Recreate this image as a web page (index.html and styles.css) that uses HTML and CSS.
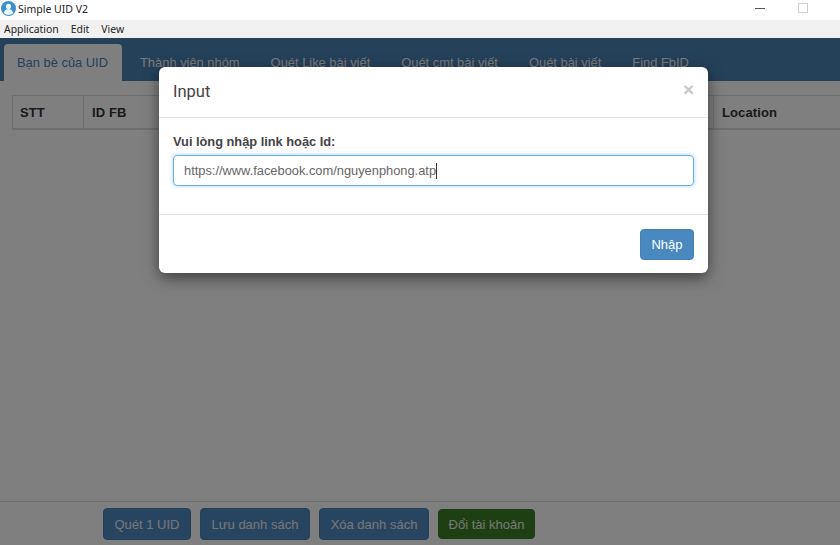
FILE: index.html
```html
<!DOCTYPE html>
<html lang="vi">
<head>
<meta charset="utf-8">
<title>Simple UID V2</title>
<link rel="stylesheet" href="styles.css">
</head>
<body>
<div class="window">
  <header class="titlebar">
    <svg class="app-icon" width="15" height="15" viewBox="0 0 15 15"><circle cx="7.5" cy="7.5" r="7.5" fill="#3a8fc9"/><circle cx="7.5" cy="5.4" r="2.6" fill="#eaf5fb"/><path d="M2.8 12.2c.5-3 2.4-4.2 4.7-4.2s4.2 1.2 4.7 4.2a7 7 0 0 1-9.4 0z" fill="#eaf5fb"/></svg>
    <span class="app-title">Simple UID V2</span>
    <span class="win-min"></span>
    <span class="win-max"></span>
  </header>
  <nav class="menubar">
    <span>Application</span><span>Edit</span><span>View</span>
  </nav>
  <div class="app">
    <ul class="tabs">
      <li class="tab active">Bạn bè của UID</li>
      <li class="tab">Thành viên nhóm</li>
      <li class="tab">Quét Like bài viết</li>
      <li class="tab">Quét cmt bài viết</li>
      <li class="tab">Quét bài viết</li>
      <li class="tab">Find FbID</li>
    </ul>
    <main class="content">
      <div class="thead">
        <div class="th th-stt">STT</div>
        <div class="th th-id">ID FB</div>
        <div class="th th-mid"></div>
        <div class="th th-loc">Location</div>
      </div>
    </main>
    <footer class="actions">
      <button class="btn blue b1">Quét 1 UID</button>
      <button class="btn blue b2">Lưu danh sách</button>
      <button class="btn blue b3">Xóa danh sách</button>
      <button class="btn green">Đổi tài khoản</button>
    </footer>
    <div class="backdrop"></div>
    <section class="modal">
      <div class="modal-head">
        <h4>Input</h4>
        <span class="close">×</span>
      </div>
      <div class="modal-body">
        <label class="field-label">Vui lòng nhập link hoặc Id:</label>
        <div class="input">https://www.facebook.com/nguyenphong.atp<i class="caret"></i></div>
      </div>
      <div class="modal-foot">
        <button class="btn-primary">Nhập</button>
      </div>
    </section>
  </div>
</div>
</body>
</html>
```

FILE: styles.css
```css
* { box-sizing: border-box; }
html, body { margin: 0; padding: 0; }
body { width: 840px; height: 545px; overflow: hidden; font-family: "Liberation Sans", Arial, sans-serif; background: #fff; }
.window { display: flex; flex-direction: column; height: 545px; }

.titlebar { height: 20px; background: #fff; display: flex; align-items: center; padding-left: 1px; font-family: "Noto Sans", "Open Sans", sans-serif; color: #222; }
.app-icon { flex: none; margin-top: -3px; }
.app-title { margin-left: 2px; font-size: 10.5px; flex: 1; margin-top: -3px; }
.win-min { width: 10px; height: 1px; background: #555; margin-right: 33px; margin-top: -4px; }
.win-max { width: 10px; height: 10px; border: 1px solid #cfcfcf; margin-right: 32px; margin-top: -4px; }

.menubar { height: 18px; background: #f0f0f0; display: flex; align-items: center; gap: 12px; padding-left: 4px; font-family: "Noto Sans", "Open Sans", sans-serif; font-size: 10.4px; color: #222; }

.app { position: relative; flex: 1; display: flex; flex-direction: column; background: #fff; }
.tabs { list-style: none; margin: 0; padding: 6px 0 0 4px; height: 43px; display: flex; background: #4a82b5; }
.tab { padding: 10px 13px 0; margin-right: 5px; font-size: 12.9px; line-height: 17px; color: #f4f4f4; border-radius: 4px 4px 0 0; white-space: nowrap; }
.tab.active { background: #fff; color: #4a82b5; width: 118px; }

.content { flex: 1; padding: 14px 0 0 12px; }
.thead { display: flex; height: 35px; width: 829px; border: 1px solid #ddd; border-width: 1px 1px 2px; }
.th { display: flex; align-items: center; padding-left: 8px; font-size: 13px; font-weight: 700; color: #333; letter-spacing: 0.1px; border-right: 1px solid #ddd; }
.th-stt { width: 71px; padding-left: 7px; }
.th-id { width: 150px; }
.th-mid { width: 480px; }
.th-loc { flex: 1; border-right: 0; }

.actions { height: 44px; border-top: 1px solid #ddd; display: flex; align-items: flex-start; padding: 6px 0 0 103px; }
.btn { height: 32px; border: 1px solid #4a82b5; border-radius: 4px; font-family: inherit; font-size: 13px; color: #eee; padding: 0; }
.blue { background: #4f8bc3; }
.b1 { width: 88px; margin-right: 9px; }
.b2 { width: 110px; margin-right: 9px; }
.b3 { width: 110px; margin-right: 9px; }
.green { width: 97px; height: 30px; margin-top: 1px; background: #3a7f25; border-color: #387a24; }

.backdrop { position: absolute; inset: 0; background: rgba(0, 0, 0, 0.5); }

.modal { position: absolute; left: 159px; top: 29px; width: 549px; height: 206px; background: #fff; border-radius: 6px; box-shadow: 0 5px 15px rgba(0, 0, 0, 0.5); display: flex; flex-direction: column; }
.modal-head { height: 51px; border-bottom: 1px solid #e5e5e5; display: flex; align-items: center; justify-content: space-between; padding: 0 14px 2px 14px; }
.modal-head h4 { margin: 0; font-family: "Roboto", "Liberation Sans", sans-serif; font-size: 16.5px; font-weight: 400; color: #444; }
.close { font-size: 19px; font-weight: 700; color: #c8c8c8; line-height: 1; margin-top: -3px; }
.modal-body { height: 97px; padding: 15px 14px 0 14px; border-bottom: 1px solid #e5e5e5; }
.field-label { display: block; font-size: 12.8px; font-weight: 700; color: #444; line-height: 17px; margin-bottom: 5px; }
.input { height: 31px; border: 1px solid #66afe9; border-radius: 4px; box-shadow: 0 0 4px rgba(102, 175, 233, 0.6); padding: 0 10px; display: flex; align-items: center; font-size: 12.85px; color: #666; }
.caret { width: 1px; height: 16px; background: #333; flex: none; }
.modal-foot { flex: 1; display: flex; justify-content: flex-end; padding: 14px 14px 0 0; }
.btn-primary { width: 54px; height: 31px; background: #4a88c0; border: 1px solid #4280b8; border-radius: 4px; color: #fff; font-family: inherit; font-size: 13px; padding: 0; }
```
